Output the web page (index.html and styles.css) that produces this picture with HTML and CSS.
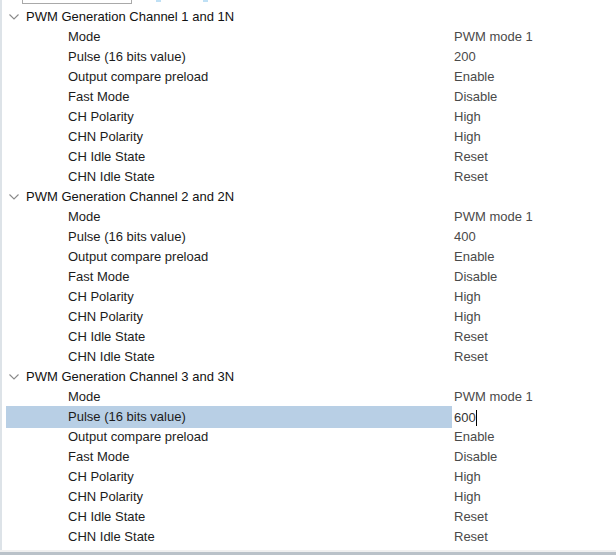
FILE: index.html
```html
<!DOCTYPE html>
<html>
<head>
<meta charset="utf-8">
<link rel="stylesheet" href="styles.css">
</head>
<body>
<div class="frame">
  <div class="topbar">
    <div class="topbox"></div>
    <div class="tick tick1"></div>
    <div class="tick tick2"></div>
  </div>
  <div class="tree">
    <div class="group">
      <div class="head"><svg class="chev" width="10" height="6" viewBox="0 0 10 6"><path d="M0.5 0.5 L5 5 L9.5 0.5" fill="none" stroke="#8a8a8a" stroke-width="1.1"/></svg><span>PWM Generation Channel 1 and 1N</span></div>
      <div class="row"><span class="lab">Mode</span><span class="val">PWM mode 1</span></div>
      <div class="row"><span class="lab">Pulse (16 bits value)</span><span class="val">200</span></div>
      <div class="row"><span class="lab">Output compare preload</span><span class="val">Enable</span></div>
      <div class="row"><span class="lab">Fast Mode</span><span class="val">Disable</span></div>
      <div class="row"><span class="lab">CH Polarity</span><span class="val">High</span></div>
      <div class="row"><span class="lab">CHN Polarity</span><span class="val">High</span></div>
      <div class="row"><span class="lab">CH Idle State</span><span class="val">Reset</span></div>
      <div class="row"><span class="lab">CHN Idle State</span><span class="val">Reset</span></div>
    </div>
    <div class="group">
      <div class="head"><svg class="chev" width="10" height="6" viewBox="0 0 10 6"><path d="M0.5 0.5 L5 5 L9.5 0.5" fill="none" stroke="#8a8a8a" stroke-width="1.1"/></svg><span>PWM Generation Channel 2 and 2N</span></div>
      <div class="row"><span class="lab">Mode</span><span class="val">PWM mode 1</span></div>
      <div class="row"><span class="lab">Pulse (16 bits value)</span><span class="val">400</span></div>
      <div class="row"><span class="lab">Output compare preload</span><span class="val">Enable</span></div>
      <div class="row"><span class="lab">Fast Mode</span><span class="val">Disable</span></div>
      <div class="row"><span class="lab">CH Polarity</span><span class="val">High</span></div>
      <div class="row"><span class="lab">CHN Polarity</span><span class="val">High</span></div>
      <div class="row"><span class="lab">CH Idle State</span><span class="val">Reset</span></div>
      <div class="row"><span class="lab">CHN Idle State</span><span class="val">Reset</span></div>
    </div>
    <div class="group">
      <div class="head"><svg class="chev" width="10" height="6" viewBox="0 0 10 6"><path d="M0.5 0.5 L5 5 L9.5 0.5" fill="none" stroke="#8a8a8a" stroke-width="1.1"/></svg><span>PWM Generation Channel 3 and 3N</span></div>
      <div class="row"><span class="lab">Mode</span><span class="val">PWM mode 1</span></div>
      <div class="row selected"><span class="lab">Pulse (16 bits value)</span><span class="val editing">600<span class="caret"></span></span></div>
      <div class="row"><span class="lab">Output compare preload</span><span class="val">Enable</span></div>
      <div class="row"><span class="lab">Fast Mode</span><span class="val">Disable</span></div>
      <div class="row"><span class="lab">CH Polarity</span><span class="val">High</span></div>
      <div class="row"><span class="lab">CHN Polarity</span><span class="val">High</span></div>
      <div class="row"><span class="lab">CH Idle State</span><span class="val">Reset</span></div>
      <div class="row"><span class="lab">CHN Idle State</span><span class="val">Reset</span></div>
    </div>
  </div>
</div>
<div class="bottom"></div>
</body>
</html>
```
FILE: styles.css
```css
html, body {
  margin: 0;
  padding: 0;
  background: #fff;
}
body {
  width: 616px;
  height: 559px;
  overflow: hidden;
  font-family: "Liberation Sans", Arial, sans-serif;
  font-size: 13px;
  color: #1a1a1a;
}
.frame {
  height: 550px;
  border-left: 2px solid #dde3e8;
  box-sizing: border-box;
  position: relative;
}
.topbar {
  height: 6px;
  position: relative;
}
.topbox {
  position: absolute;
  left: 20px;
  top: -2px;
  width: 110px;
  height: 6px;
  border: 1px solid #a9a9a9;
  border-top: none;
  box-sizing: border-box;
}
.tick {
  position: absolute;
  top: 0;
  height: 2px;
  width: 5px;
  background: #bfe0f5;
}
.tick1 { left: 154px; }
.tick2 { left: 201px; }
.tree {
  display: flex;
  flex-direction: column;
}
.head {
  height: 20px;
  display: flex;
  align-items: center;
  color: #111;
  padding-top: 1px;
  box-sizing: border-box;
}
.chev {
  margin-left: 7px;
  margin-right: 7px;
  margin-top: 0;
}
.row {
  height: 20px;
  display: grid;
  grid-template-columns: 446px 1fr;
  margin-left: 4px;
  line-height: 21px;
}
.lab {
  padding-left: 62px;
  color: #1c1c1c;
}
.val {
  padding-left: 2px;
  color: #4a4a4a;
}
.selected .lab {
  background: #b8cfe5;
  line-height: 20px;
  padding-top: 1px;
  box-sizing: border-box;
}
.editing {
  color: #333;
  display: flex;
  align-items: center;
  padding-top: 1px;
}
.caret {
  display: inline-block;
  width: 1px;
  height: 16px;
  background: #000;
}
.bottom {
  height: 2px;
  background: #f0f0f0;
  border-bottom: 3px solid #bac2c9;
}
```
